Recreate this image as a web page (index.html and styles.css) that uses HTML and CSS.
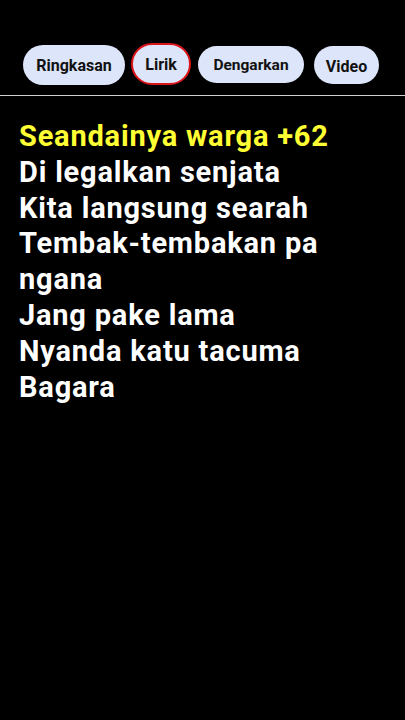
FILE: index.html
```html
<!DOCTYPE html>
<html lang="id">
<head>
<meta charset="utf-8">
<link rel="stylesheet" href="styles.css">
</head>
<body>
<nav class="tabs">
  <button class="tab tab-ringkasan">Ringkasan</button>
  <button class="tab tab-lirik active">Lirik</button>
  <button class="tab tab-dengarkan">Dengarkan</button>
  <button class="tab tab-video">Video</button>
</nav>
<hr class="divider">
<main class="lyrics">
  <p class="line current">Seandainya warga +62</p>
  <p class="line">Di legalkan senjata</p>
  <p class="line">Kita langsung searah</p>
  <p class="line">Tembak-tembakan pa ngana</p>
  <p class="line">Jang pake lama</p>
  <p class="line">Nyanda katu tacuma</p>
  <p class="line">Bagara</p>
</main>
</body>
</html>
```
FILE: styles.css
```css
html, body {
  margin: 0;
  padding: 0;
  background: #000;
  height: 100%;
}
body {
  font-family: Roboto, "Liberation Sans", sans-serif;
  color: #fff;
}
.tabs {
  display: flex;
  align-items: flex-start;
  padding: 43px 0 0 23px;
  height: 52px;
  box-sizing: content-box;
}
.tab {
  font-family: Roboto, "Liberation Sans", sans-serif;
  font-weight: 700;
  font-size: 16px;
  color: #111;
  background: #dce5f9;
  border: 0;
  border-radius: 20px;
  padding: 0;
  display: flex;
  align-items: center;
  justify-content: center;
}
.tab-ringkasan {
  width: 102px;
  height: 40px;
  margin-top: 2px;
}
.tab-lirik {
  width: 60px;
  height: 42px;
  margin-left: 6px;
  border: 2px solid #dc1419;
  box-sizing: border-box;
  border-radius: 21px;
}
.tab-dengarkan {
  width: 106px;
  height: 37px;
  margin-top: 3px;
  margin-left: 7px;
  font-size: 15.5px;
}
.tab-video {
  width: 65px;
  height: 38px;
  margin-top: 3px;
  margin-left: 10px;
  font-size: 16px;
  padding-top: 3px;
  box-sizing: border-box;
}
.divider {
  margin: 0;
  border: 0;
  height: 1px;
  background: #cfcfcf;
}
.lyrics {
  padding: 23px 10px 0 19px;
}
.line {
  margin: 0;
  font-weight: 700;
  font-size: 29px;
  line-height: 35.8px;
  letter-spacing: 0.8px;
  color: #fff;
}
.line.current {
  color: #ffff33;
}
```
